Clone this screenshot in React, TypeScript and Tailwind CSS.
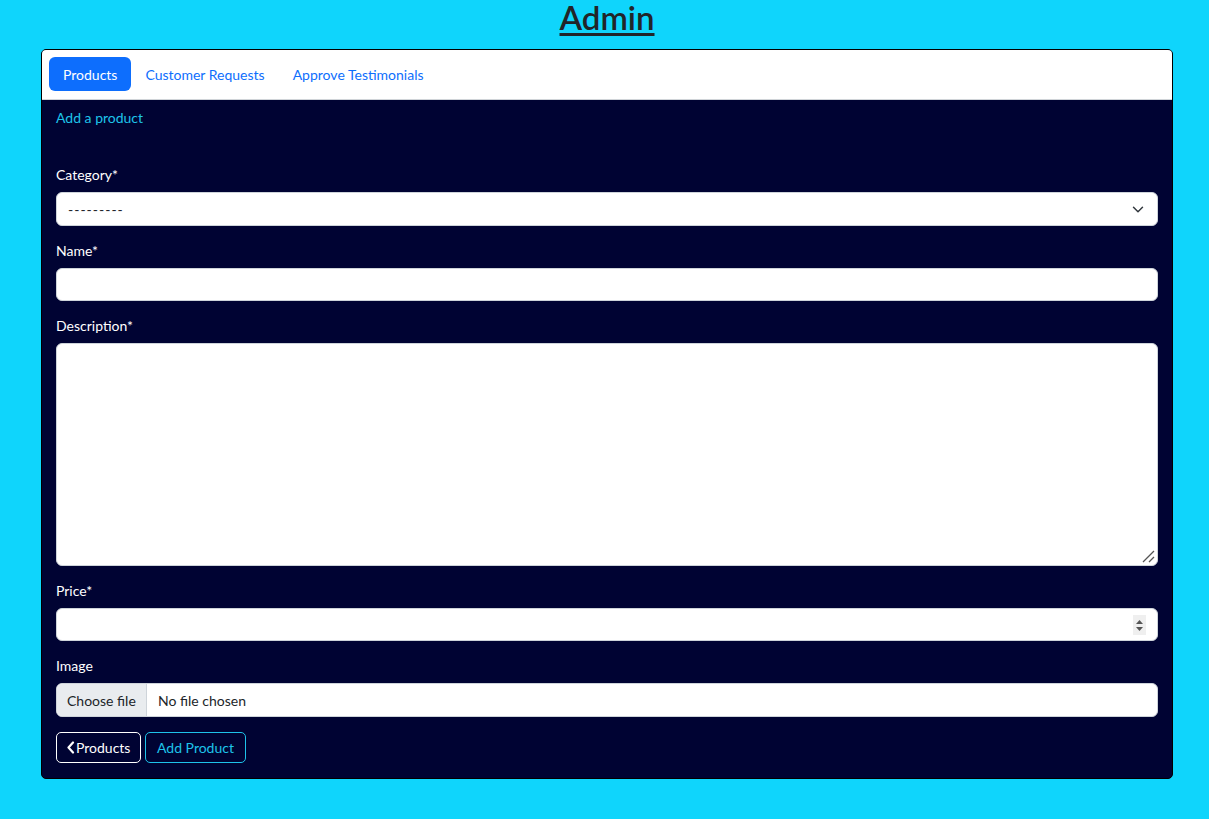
import React from "react";

const font = { fontFamily: 'Lato, "Noto Sans", sans-serif' };

function Label({ children }: { children: React.ReactNode }) {
  return <div className="text-[14px] leading-[20px] mb-[7px] text-white">{children}</div>;
}

export default function App() {
  return (
    <div className="min-h-[819px] w-full bg-[#0fd5fc] pt-[1px]" style={font}>
      <h1 className="text-center pl-[5px] text-[33px] leading-[32px] font-semibold text-[#212529] underline underline-offset-[3px] decoration-[3px] mb-[16px]">
        Admin
      </h1>
      <div className="ml-[41px] mr-[36px] rounded-[5px] border border-black bg-[#000333] overflow-hidden">
        <div className="bg-white border-b border-[#d0d4d8] px-[7px] pt-[7px] pb-[8px] flex items-center">
          <div className="h-[34px] px-[14px] rounded-[6px] bg-[#0d6efd] text-white text-[14px] flex items-center">Products</div>
          <div className="h-[34px] px-[14px] text-[#0d6efd] text-[14px] flex items-center">Customer Requests</div>
          <div className="h-[34px] px-[14px] text-[#0d6efd] text-[14px] flex items-center">Approve Testimonials</div>
        </div>
        <div className="px-[14px] pt-[8px] pb-[15px]">
          <div className="text-[14px] leading-[20px] text-[#1ec3ea] mb-[37px]">Add a product</div>

          <Label>Category*</Label>
          <div className="relative h-[34px] mb-[15px] rounded-[6px] bg-white border border-[#ced4da] flex items-center px-[11px] text-[14px] text-[#212529]">
            <span className="tracking-[1px]">---------</span>
            <svg className="absolute right-[13px] top-[12px]" width="12" height="9" viewBox="0 0 16 12">
              <path d="M2 3l6 6 6-6" fill="none" stroke="#343a40" strokeWidth="2" strokeLinecap="round" strokeLinejoin="round" />
            </svg>
          </div>

          <Label>Name*</Label>
          <div className="h-[33px] mb-[15px] rounded-[6px] bg-white border border-[#ced4da]" />

          <Label>Description*</Label>
          <div className="relative h-[223px] mb-[15px] rounded-[6px] bg-white border border-[#ced4da]">
            <svg className="absolute right-[2px] bottom-[2px]" width="14" height="14" viewBox="0 0 14 14">
              <path d="M13 2L2 13M13 8L8 13" stroke="#555" strokeWidth="1.3" />
            </svg>
          </div>

          <Label>Price*</Label>
          <div className="relative h-[33px] mb-[15px] rounded-[6px] bg-white border border-[#ced4da]">
            <div className="absolute right-[11px] top-[6px] w-[13px] h-[20px] bg-[#efefef] flex flex-col items-center justify-center gap-[3px]">
              <svg width="7" height="4" viewBox="0 0 7 4"><path d="M3.5 0L7 4H0z" fill="#555" /></svg>
              <svg width="7" height="4" viewBox="0 0 7 4"><path d="M0 0h7L3.5 4z" fill="#555" /></svg>
            </div>
          </div>

          <Label>Image</Label>
          <div className="h-[34px] mb-[15px] rounded-[6px] bg-white border border-[#ced4da] flex overflow-hidden text-[14px] text-[#212529]">
            <div className="w-[90px] bg-[#e9ecef] border-r border-[#ced4da] pl-[10px] flex items-center">Choose file</div>
            <div className="px-[11px] flex items-center">No file chosen</div>
          </div>

          <div className="flex gap-[4px]">
            <div className="h-[31px] w-[85px] pl-[9px] rounded-[5px] border border-white text-white text-[14px] flex items-center">
              <svg width="9" height="13" viewBox="0 0 9 13" className="mr-[1px]">
                <path d="M7 1.5L2.5 6.5 7 11.5" fill="none" stroke="white" strokeWidth="2.2" strokeLinecap="round" strokeLinejoin="round" />
              </svg>
              Products
            </div>
            <div className="h-[31px] w-[101px] justify-center rounded-[5px] border border-[#1ec3ea] text-[#1ec3ea] text-[14px] flex items-center">Add Product</div>
          </div>
        </div>
      </div>
    </div>
  );
}
